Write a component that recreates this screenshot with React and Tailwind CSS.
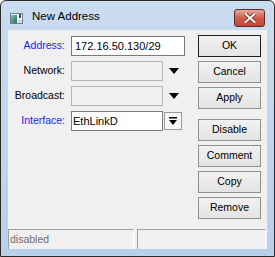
const font = { fontFamily: '"Liberation Sans", Arial, sans-serif' };

function Btn({ children, isDefault, className = '' }) {
  return (
    <div
      className={`h-[22px] w-[63px] flex items-center justify-center text-[10.5px] text-black bg-gradient-to-b from-[#f2f2f2] to-[#e3e3e3] border ${
        isDefault ? 'border-[#1e1e1e]' : 'border-[#8f8f8f]'
      } ${className}`}
    >
      {children}
    </div>
  );
}

function Arrow() {
  return (
    <svg width="10" height="6" viewBox="0 0 10 6" className="ml-[6px]">
      <polygon points="0,0 10,0 5,6" fill="#000" />
    </svg>
  );
}

function Row({ label, blue, children }) {
  return (
    <div className="flex items-center h-[20px]">
      <div className={`w-[57px] text-right text-[10.5px] ${blue ? 'text-[#1c1cf0]' : 'text-black'}`}>{label}</div>
      <div className="ml-[6px] flex items-center">{children}</div>
    </div>
  );
}

export default function App() {
  return (
    <div
      style={font}
      className="w-[275px] h-[257px] border border-[#2a2a2a] rounded-t-[6px] bg-gradient-to-b from-[#c9dcf0] to-[#b9d0ea] flex flex-col overflow-hidden"
    >
      {/* title bar */}
      <div className="h-[29px] flex items-start relative">
        <svg width="13" height="11" viewBox="0 0 13 11" className="ml-[9px] mt-[12px]">
          <defs>
            <linearGradient id="ig" x1="0" y1="0" x2="1" y2="1">
              <stop offset="0" stopColor="#7fc6a8" />
              <stop offset="1" stopColor="#1f6e5a" />
            </linearGradient>
          </defs>
          <rect x="0.5" y="0.5" width="12" height="10" fill="#f4f6f8" stroke="#6f7f8f" />
          <rect x="1" y="2" width="6" height="8" fill="url(#ig)" />
          <rect x="9" y="1" width="2" height="4" fill="#3d4a56" />
          <rect x="8" y="7" width="4" height="3" fill="#cfd8e0" />
        </svg>
        <div className="ml-[9px] mt-[10px] text-[11.5px] text-black leading-none">New Address</div>
        <div className="absolute left-[233px] top-[8px] w-[31px] h-[18px] rounded-[3px] border border-[#5b2a26] bg-gradient-to-b from-[#e9a79b] via-[#cf5c4d] to-[#c2463a] flex items-center justify-center">
          <svg width="12" height="10" viewBox="0 0 12 10">
            <path d="M1.5 1 L10.5 9 M10.5 1 L1.5 9" stroke="#6b2a24" strokeWidth="3.6" strokeLinecap="square" />
            <path d="M1.5 1 L10.5 9 M10.5 1 L1.5 9" stroke="#ffffff" strokeWidth="2" strokeLinecap="square" />
          </svg>
        </div>
      </div>

      {/* client area */}
      <div className="mx-[7px] h-[219px] bg-[#f0f0f0] flex flex-col">
        <div className="flex pt-[5px]">
          <div className="w-[190px] pt-[1px] flex flex-col gap-[5px]">
            <Row label="Address:" blue>
              <div className="w-[114px] h-[20px] bg-white border border-[#7a7a7a] text-[11px] flex items-center pl-[3px]">
                172.16.50.130/29
              </div>
            </Row>
            <Row label="Network:">
              <div className="w-[92px] h-[20px] bg-[#f0f0f0] border border-[#b4b4b4]" />
              <Arrow />
            </Row>
            <Row label="Broadcast:">
              <div className="w-[92px] h-[20px] bg-[#f0f0f0] border border-[#b4b4b4]" />
              <Arrow />
            </Row>
            <Row label="Interface:" blue>
              <div className="w-[92px] h-[20px] bg-white border border-[#7a7a7a] text-[11px] flex items-center pl-[1px]">
                EthLinkD
              </div>
              <div className="ml-[1px] w-[18px] h-[18px] bg-[#f7f7f7] border border-[#9a9a9a] flex items-center justify-center">
                <svg width="8" height="8" viewBox="0 0 8 8">
                  <rect x="0" y="0" width="8" height="1.5" fill="#000" />
                  <polygon points="0,3 8,3 4,8" fill="#000" />
                </svg>
              </div>
            </Row>
          </div>
          <div className="flex flex-col">
            <Btn isDefault>OK</Btn>
            <Btn className="mt-[4px]">Cancel</Btn>
            <Btn className="mt-[4px]">Apply</Btn>
            <Btn className="mt-[10px]">Disable</Btn>
            <Btn className="mt-[4px]">Comment</Btn>
            <Btn className="mt-[4px]">Copy</Btn>
            <Btn className="mt-[4px]">Remove</Btn>
          </div>
        </div>
        <div className="mt-auto flex h-[20px] gap-[3px]">
          <div className="w-[126px] border-t border-l border-[#a0a0a0] border-r-white border-r text-[10.5px] text-[#6d6d6d] pl-[1px] leading-[18px]">
            disabled
          </div>
          <div className="w-[129px] border-t border-l border-[#a0a0a0] border-r border-r-white" />
        </div>
      </div>
    </div>
  );
}
